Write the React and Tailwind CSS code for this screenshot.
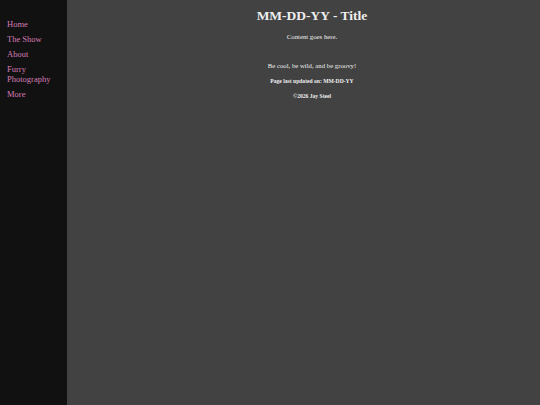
export default function App() {
  const links = ["Home", "The Show", "About", "Furry Photography", "More"];
  return (
    <div className="flex min-h-[405px] w-full bg-[#424242]" style={{ fontFamily: '"Liberation Serif", "Times New Roman", serif' }}>
      <nav className="w-[67px] shrink-0 bg-[#111111] pt-[19px] pl-[7px]">
        <ul className="flex flex-col gap-[5px]">
          {links.map((l) => (
            <li key={l} className="text-[8.5px] leading-[10px] text-[#d67cb6]">
              {l}
            </li>
          ))}
        </ul>
      </nav>
      <main className="flex flex-1 flex-col items-center pl-[17px] pt-[8px] text-center text-[#eeeeee]">
        <h1 className="text-[13.5px] font-bold leading-[16px]">MM-DD-YY - Title</h1>
        <p className="mt-[9px] text-[6.75px] leading-[8px]">Content goes here.</p>
        <p className="mt-[21px] text-[6.75px] leading-[8px]">Be cool, be wild, and be groovy!</p>
        <p className="mt-[8px] text-[5.6px] font-bold leading-[7px]">Page last updated on: MM-DD-YY</p>
        <p className="mt-[8px] text-[5.6px] font-bold leading-[7px]">©2026 Jay Steel</p>
      </main>
    </div>
  );
}
